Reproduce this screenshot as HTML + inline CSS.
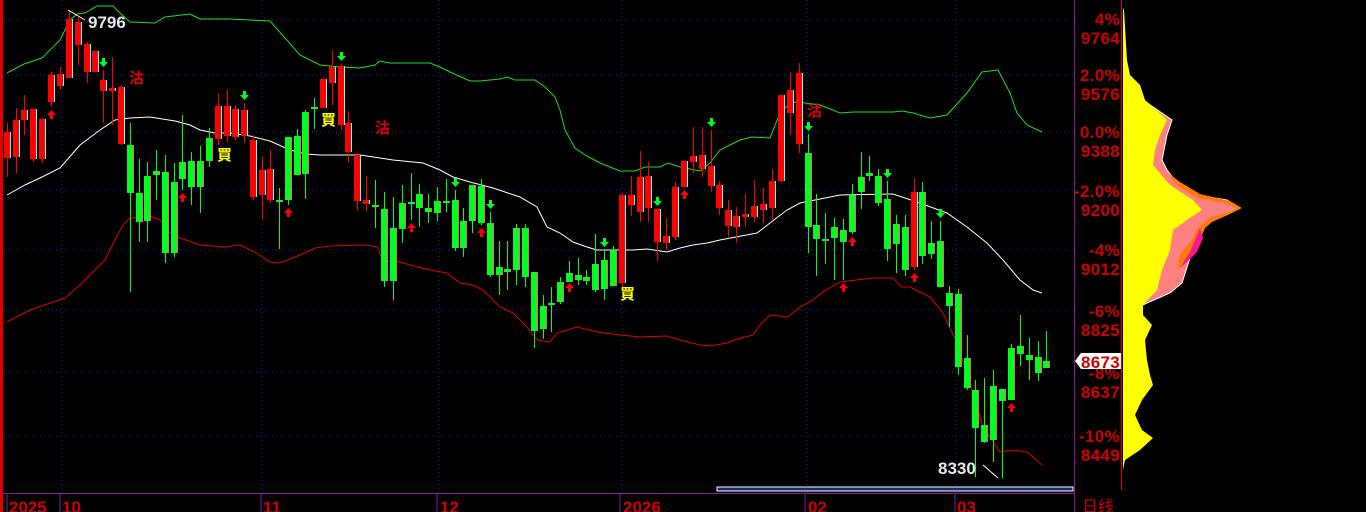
<!DOCTYPE html>
<html><head><meta charset="utf-8"><style>
html,body{margin:0;padding:0;background:#000;width:1366px;height:512px;overflow:hidden}
svg{display:block}
.ax{font-family:"Liberation Sans","Noto Sans CJK SC",sans-serif;font-size:17px;font-weight:bold;fill:#d00000;letter-spacing:0.3px}
.bt{font-family:"Liberation Sans","Noto Sans CJK SC",sans-serif;font-size:17px;fill:#d00000;font-weight:bold}
.cj{font-family:"Noto Sans CJK SC","WenQuanYi Zen Hei",sans-serif;font-size:15px;font-weight:bold}
</style></head><body>
<svg id="s" width="1366" height="512" viewBox="0 0 1366 512" xmlns="http://www.w3.org/2000/svg">
<rect width="1366" height="512" fill="#000"/>
<rect x="0" y="0" width="3" height="512" fill="#e00000"/>
<g stroke="#2020c0" stroke-width="1" stroke-dasharray="1,3" fill="none">
<line x1="4" y1="20" x2="1074" y2="20"/><line x1="4" y1="75" x2="1074" y2="75"/><line x1="4" y1="132" x2="1074" y2="132"/><line x1="4" y1="190" x2="1074" y2="190"/><line x1="4" y1="250" x2="1074" y2="250"/><line x1="4" y1="310" x2="1074" y2="310"/><line x1="4" y1="372" x2="1074" y2="372"/><line x1="4" y1="436" x2="1074" y2="436"/>
<line x1="62" y1="0" x2="62" y2="493"/><line x1="262" y1="0" x2="262" y2="493"/><line x1="439" y1="0" x2="439" y2="493"/><line x1="622" y1="0" x2="622" y2="493"/><line x1="807" y1="0" x2="807" y2="493"/><line x1="956" y1="0" x2="956" y2="493"/>
</g>
<g id="bands" fill="none" stroke-width="1">
<polyline stroke="#20e020" points="7,73 24,64 33,61 42,58 60,40 70,20 77,14 85,13 97,6 113,6 120,13 130,22 155,23 165,17 190,14 200,19 230,19 270,21 285,38 300,55 320,65 340,67 360,68 375,65 380,61 390,63 430,63 440,67 450,72 470,81 480,81 500,79 507,77 515,80 535,80 545,87 555,97 560,110 565,130 575,148 585,155 600,163 620,171 635,171 645,167 660,167 668,163 680,167 700,171 710,163 720,150 730,145 740,140 752,137 770,138 780,113 790,103 798,102 820,105 840,113 853,112 893,112 902,111 913,113 930,118 947,115 967,93 982,72 998,70 1010,93 1017,113 1027,125 1042,132"/>
<polyline stroke="#ffffff" points="7,195 25,185 40,178 60,168 80,145 100,130 115,120 130,118 150,117 175,121 190,125 200,130 215,133 230,133 250,136 270,141 290,150 305,154 320,155 360,155 380,158 393,160 423,163 440,170 453,177 470,182 493,188 520,197 537,207 547,227 560,233 573,242 587,247 597,250 633,250 647,249 667,252 680,248 693,245 707,243 720,240 757,233 770,223 787,210 800,203 840,195 893,194 917,202 947,213 967,227 987,243 1003,260 1020,280 1033,290 1042,293"/>
<polyline stroke="#e00000" points="7,322 30,310 50,303 65,298 80,285 95,270 105,260 115,240 123,225 130,218 150,216 160,220 170,233 180,238 200,245 225,247 240,245 255,252 270,262 280,263 300,255 315,248 330,246 365,245 378,247 383,263 393,260 410,265 430,270 447,273 460,283 473,285 483,290 500,307 513,313 527,327 537,340 550,342 557,333 577,327 597,332 620,335 640,337 667,336 680,340 700,345 710,346 727,343 737,339 753,335 760,325 770,315 788,317 800,307 813,300 823,292 840,282 873,278 893,278 902,287 910,287 930,297 943,313 957,343 973,393 983,427 1000,452 1013,450 1027,452 1042,465"/>
</g>
<g id="c"></g>
<line x1="68" y1="10" x2="85" y2="20" stroke="#fff"/>
<text x="88" y="28" fill="#e8e8e8" font-family="Liberation Sans,sans-serif" font-size="17" font-weight="bold">9796</text>
<line x1="983" y1="465" x2="998" y2="478" stroke="#fff"/>
<text x="938" y="474" fill="#e8e8e8" font-family="Liberation Sans,sans-serif" font-size="17" font-weight="bold">8330</text>
<text x="129" y="83" class="cj" fill="#e00000">沽</text>
<text x="375" y="133" class="cj" fill="#e00000">沽</text>
<text x="807" y="116" class="cj" fill="#e00000">沽</text>
<text x="217" y="160" class="cj" fill="#ffff00">買</text>
<text x="321" y="125" class="cj" fill="#ffff00">買</text>
<text x="620" y="299" class="cj" fill="#ffff00">買</text>
<rect x="717" y="487" width="356" height="4" fill="#1a2a6a" stroke="#fff" stroke-width="1"/>
<line x1="0" y1="493.5" x2="1074" y2="493.5" stroke="#8a1a9a" stroke-width="1"/>
<line x1="1074.5" y1="0" x2="1074.5" y2="512" stroke="#8a1a9a" stroke-width="1"/>
<line x1="1121.5" y1="0" x2="1121.5" y2="490" stroke="#e00000" stroke-width="1"/>
<g stroke="#8a1a9a"><line x1="7" y1="494" x2="7" y2="512"/><line x1="60" y1="494" x2="60" y2="512"/><line x1="261" y1="494" x2="261" y2="512"/><line x1="437" y1="494" x2="437" y2="512"/><line x1="620" y1="494" x2="620" y2="512"/><line x1="805" y1="494" x2="805" y2="512"/><line x1="955" y1="494" x2="955" y2="512"/></g>
<text x="9" y="513" class="bt">2025</text><text x="62" y="513" class="bt">10</text><text x="263" y="513" class="bt">11</text><text x="440" y="513" class="bt">12</text><text x="623" y="513" class="bt">2026</text><text x="808" y="513" class="bt">02</text><text x="957" y="513" class="bt">03</text>
<text x="1082" y="512" class="cj" fill="#d00000" style="font-weight:normal;font-size:16px">日线</text>
<g class="ax" text-anchor="end">
<text x="1120" y="25">4%</text><text x="1120" y="44">9764</text>
<text x="1120" y="81">2.0%</text><text x="1120" y="100">9576</text>
<text x="1120" y="138">0.0%</text><text x="1120" y="157">9388</text>
<text x="1120" y="197">-2.0%</text><text x="1120" y="216">9200</text>
<text x="1120" y="256">-4%</text><text x="1120" y="275">9012</text>
<text x="1120" y="317">-6%</text><text x="1120" y="336">8825</text>
<text x="1120" y="379">-8%</text><text x="1120" y="398">8637</text>
<text x="1120" y="442">-10%</text><text x="1120" y="461">8449</text>
</g>
<polygon points="1075,361 1081,353 1121,353 1121,369 1081,369" fill="#fff"/>
<text x="1120" y="368" class="ax" text-anchor="end" fill="#e00000">8673</text>
<polygon fill="#ff8080" stroke="#fff" stroke-width="1" points="1143,100 1172,120 1167,135 1162,160 1167,170 1175,180 1197,195 1227,200 1238,207 1227,213 1210,220 1203,228 1200,240 1190,258 1182,283 1170,293 1147,303 1143,305"/>
<polygon fill="#ff7a00" points="1167,172 1180,182 1200,194 1230,201 1242,208 1230,214 1212,222 1205,228 1198,245 1185,262 1177,270 1180,255 1192,240 1198,228 1210,218 1228,212 1236,208 1226,203 1198,198 1178,186"/>
<polygon fill="#ff1493" points="1200,228 1203,238 1197,252 1187,262 1180,268 1190,252 1195,240"/>
<polygon fill="#ffff00" points="1123,8 1124,10 1127,60 1130,75 1140,85 1145,100 1167,120 1160,135 1155,150 1153,165 1170,185 1193,200 1202,210 1187,220 1173,230 1170,250 1162,270 1157,290 1143,305 1143,315 1152,325 1145,340 1147,360 1150,375 1153,385 1142,400 1135,415 1142,430 1153,438 1140,450 1125,460 1123,470 1123,490"/>
</svg>
<script>
var d=[
[7,132,158,123,177,'r'],[16,120,157,108,173,'r'],[24,110,120,95,135,'r'],[33,109,159,109,162,'r'],[42,119,159,118,163,'r'],[51,75,102,72,107,'r'],[60,74,86,67,90,'r'],[69,19,78,10,78,'r'],[78,22,45,17,65,'r'],[87,44,72,42,83,'r'],[95,51,72,51,72,'r'],[103,80,91,70,123,'r'],[112,88,91,57,125,'r'],[121,87,144,86,145,'r'],
[130,145,193,123,292,'g'],[139,193,222,159,242,'g'],[147,176,221,162,242,'g'],[156,171,175,150,200,'g'],[165,172,253,155,263,'g'],[174,182,253,163,257,'g'],[182,162,179,115,190,'g'],[191,161,187,152,205,'g'],[200,161,187,146,213,'g'],[209,138,161,128,167,'g'],
[218,106,139,93,145,'r'],[227,106,136,90,142,'r'],[235,109,137,105,140,'r'],[244,110,136,103,143,'r'],[253,140,197,135,200,'r'],[262,170,195,157,220,'r'],[270,169,200,150,203,'r'],
[279,200,201,188,249,'g'],[288,137,200,137,205,'g'],[297,136,175,129,175,'g'],[305,112,174,110,199,'g'],[314,107,109,98,129,'g'],
[323,79,108,79,108,'r'],[332,67,83,51,105,'r'],[341,66,125,64,130,'r'],[348,123,152,111,163,'r'],[357,155,201,153,211,'r'],[366,200,204,176,211,'r'],
[375,205,207,180,228,'g'],[384,209,281,192,287,'g'],[393,228,281,197,300,'g'],[402,203,229,185,243,'g'],[411,202,204,173,220,'g'],[419,194,208,184,227,'g'],[428,208,212,194,223,'g'],[437,201,213,187,221,'g'],[446,201,202,179,212,'g'],[455,200,248,190,251,'g'],[463,221,248,208,257,'g'],[472,185,221,185,233,'g'],[481,186,223,179,225,'g'],[490,223,275,212,277,'g'],[499,267,275,241,295,'g'],[507,269,272,241,290,'g'],[516,228,270,224,285,'g'],[525,228,277,224,287,'g'],[534,272,331,272,348,'g'],[543,306,329,295,339,'g'],[551,303,305,287,332,'g'],[560,282,302,277,304,'g'],[569,273,282,261,280,'g'],[578,275,280,258,285,'g'],[586,277,281,270,285,'g'],[595,264,290,234,292,'g'],[604,260,289,250,300,'g'],[613,250,286,246,286,'g'],
[622,195,283,193,287,'r'],[631,195,205,176,216,'r'],[640,177,212,151,222,'r'],[648,176,208,162,222,'r'],[657,209,242,209,261,'r'],[666,236,243,218,250,'r'],[675,187,237,182,240,'r'],[684,161,187,161,187,'r'],[693,156,162,127,173,'r'],[702,155,169,127,177,'r'],[711,166,186,130,192,'r'],[719,185,208,181,215,'r'],[728,210,226,200,237,'r'],[736,216,227,207,243,'r'],[745,214,217,194,227,'r'],[754,206,217,180,222,'r'],[763,204,210,188,223,'r'],[772,181,208,169,220,'r'],[781,95,181,95,182,'r'],[790,90,113,72,135,'r'],[799,73,144,63,153,'r'],
[808,153,227,134,253,'g'],[816,225,239,194,276,'g'],[825,239,241,213,264,'g'],[834,227,238,218,280,'g'],[843,230,242,219,280,'g'],[852,195,232,184,234,'g'],[861,177,192,152,209,'g'],[869,173,176,156,181,'g'],[878,176,203,169,206,'g'],[887,199,249,181,261,'g'],[896,224,244,215,273,'g'],[905,227,270,215,276,'g'],
[914,192,267,178,270,'r'],
[922,192,256,182,264,'g'],[931,243,254,221,259,'g'],[940,241,287,221,287,'g'],[949,293,306,286,327,'g'],[958,294,367,289,375,'g'],[967,358,388,335,390,'g'],[975,390,428,380,477,'g'],[984,425,442,378,443,'g'],[993,386,440,370,462,'g'],[1002,389,401,389,478,'g'],[1011,348,400,344,400,'g'],[1020,346,354,315,366,'g'],[1029,355,360,338,380,'g'],[1038,357,373,341,381,'g'],[1046,361,368,331,368,'g']];
var up=[51,182,288,411,481,569,684,843,852,914,1011],dn=[103,244,341,455,490,604,657,711,808,887,940];
var h='';
d.forEach(function(c){var col=c[5]=='r'?'#ff0000':'#00ff20';
h+='<line x1="'+(c[0]+.5)+'" y1="'+c[3]+'" x2="'+(c[0]+.5)+'" y2="'+c[4]+'" stroke="'+col+'"/>';
var bh=Math.max(2,c[2]-c[1]);
h+='<rect x="'+(c[0]-3)+'" y="'+c[1]+'" width="7" height="'+bh+'" fill="'+col+'"/>';
h+='<rect x="'+(c[0]+3)+'" y="'+c[1]+'" width="1" height="'+bh+'" fill="'+(c[5]=='r'?'#60ffff':'#ff6060')+'"/>';
});
d.forEach(function(c){
if(up.indexOf(c[0])>=0){var y=c[4]+3;h+='<path d="M'+(c[0]-4)+' '+(y+5)+'L'+(c[0]+.5)+' '+y+'L'+(c[0]+5)+' '+(y+5)+'Z M'+(c[0]-1)+' '+(y+4)+'h3v5h-3z" fill="#ff0000"/>';}
if(dn.indexOf(c[0])>=0){var y=c[3]-3;h+='<path d="M'+(c[0]-4)+' '+(y-5)+'L'+(c[0]+.5)+' '+y+'L'+(c[0]+5)+' '+(y-5)+'Z M'+(c[0]-1)+' '+(y-4)+'h3v-5h-3z" fill="#00ff20"/>';}
});
document.getElementById('c').innerHTML=h;
</script>
</body></html>
